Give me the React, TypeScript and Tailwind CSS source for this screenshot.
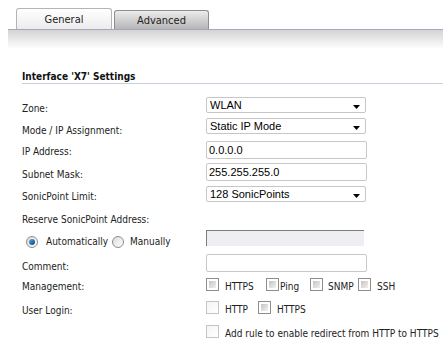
import React from 'react'

function Select({ value }: { value: string }) {
  return (
    <div className="flex items-start w-[160px] h-[16px] border border-[#c6c6c6] rounded-[2px] bg-white pl-[3px]">
      <span className="font-['Liberation_Sans',sans-serif] text-[11px] leading-[14px] text-black">{value}</span>
      <svg className="ml-auto mr-[5px] mt-[7px]" width="7" height="4" viewBox="0 0 7 4">
        <path d="M0 0H7L3.5 4Z" fill="#000" />
      </svg>
    </div>
  )
}

function TextBox({ value }: { value?: string }) {
  return (
    <div className="flex items-center w-[161px] h-[18px] border border-[#c8c8c8] rounded-[2px] bg-white pl-[2px]">
      <span className="font-['Liberation_Sans',sans-serif] text-[11px] leading-[14px] text-black">{value}</span>
    </div>
  )
}

function Check({ light }: { light?: boolean }) {
  return light ? (
    <div className="w-[13px] h-[13px] shrink-0 border border-[#c4c4c4] bg-gradient-to-br from-[#f4f4f4] to-white" />
  ) : (
    <div className="w-[13px] h-[13px] shrink-0 border border-[#8e8e8e] bg-white p-[2px]">
      <div className="w-full h-full bg-gradient-to-br from-[#c4c4c4] to-[#f2f2f2]" />
    </div>
  )
}

function Radio({ on }: { on?: boolean }) {
  return (
    <div className="flex items-center justify-center w-[12px] h-[12px] rounded-full border border-[#8c8c8c] bg-gradient-to-br from-[#dcdcdc] to-white shrink-0">
      {on && <div className="w-[6px] h-[6px] rounded-full bg-gradient-to-br from-[#5fb0e8] to-[#0b3f7a]" />}
    </div>
  )
}

export default function App() {
  return (
    <div className="w-[443px] h-[356px] overflow-hidden bg-white text-[#222] font-['DejaVu_Sans_Condensed','Liberation_Sans',sans-serif] text-[10px] leading-[13px]">
      {/* tabs */}
      <div className="flex items-end pl-[16px] pt-[8px] gap-[2px]">
        <div className="flex justify-center items-center w-[96px] h-[21px] border border-b-0 border-[#b4b4b4] rounded-t-[3px] bg-gradient-to-b from-white to-[#ececec] text-[11px] text-[#222]">
          General
        </div>
        <div className="flex justify-center items-center w-[95px] h-[19px] border border-b-0 border-[#8e8e8e] rounded-t-[3px] bg-gradient-to-b from-[#ececec] to-[#b6b6b6] text-[11px] text-[#222]">
          Advanced
        </div>
      </div>
      <div className="ml-[8px] h-[20px] border-t border-[#a6a6c0] bg-gradient-to-b from-[#d4d4d4] to-white" />

      {/* section title */}
      <div className="ml-[22px] mt-[22px] border-b border-[#c6d0dc] font-bold text-[10px] leading-[12px] text-[#111]">
        Interface 'X7' Settings
      </div>

      <div className="flex pl-[22px] h-[21px] mt-[13px]">
        <div className="w-[184px] pt-[5px]">Zone:</div>
        <Select value="WLAN" />
      </div>
      <div className="flex pl-[22px] h-[23px]">
        <div className="w-[184px] pt-[6px]">Mode / IP Assignment:</div>
        <Select value="Static IP Mode" />
      </div>
      <div className="flex pl-[22px] h-[22px]">
        <div className="w-[184px] pt-[4px]">IP Address:</div>
        <TextBox value="0.0.0.0" />
      </div>
      <div className="flex pl-[22px] h-[23px]">
        <div className="w-[184px] pt-[5px]">Subnet Mask:</div>
        <TextBox value="255.255.255.0" />
      </div>
      <div className="flex pl-[22px] h-[27px]">
        <div className="w-[184px] pt-[4px]">SonicPoint Limit:</div>
        <Select value="128 SonicPoints" />
      </div>
      <div className="flex pl-[22px] h-[17px]">
        <div>Reserve SonicPoint Address:</div>
      </div>
      <div className="flex pl-[26px] h-[24px]">
        <div className="flex w-[180px] pt-[5px]">
          <div className="flex items-start w-[86px]">
            <div className="mt-[1px]">
              <Radio on />
            </div>
            <span className="ml-[8px]">Automatically</span>
          </div>
          <div className="flex items-start">
            <div className="mt-[1px]">
              <Radio />
            </div>
            <span className="ml-[6px]">Manually</span>
          </div>
        </div>
        <div className="w-[158px] h-[16px] border-t border-l border-[#7c7c7c] bg-[#eeeff2]" />
      </div>
      <div className="flex pl-[22px] h-[24px]">
        <div className="w-[184px] pt-[6px]">Comment:</div>
        <TextBox />
      </div>
      <div className="flex pl-[22px] h-[23px]">
        <div className="w-[184px] pt-[2px]">Management:</div>
        <div className="flex items-start">
          <div className="flex items-start w-[60px]">
            <Check />
            <span className="ml-[6px] pt-[2px]">HTTPS</span>
          </div>
          <div className="flex items-start w-[44px]">
            <Check />
            <span className="ml-[1px] pt-[2px]">Ping</span>
          </div>
          <div className="flex items-start w-[48px]">
            <Check />
            <span className="ml-[5px] pt-[2px]">SNMP</span>
          </div>
          <div className="flex items-start">
            <Check />
            <span className="ml-[6px] pt-[2px]">SSH</span>
          </div>
        </div>
      </div>
      <div className="flex pl-[22px] h-[24px]">
        <div className="w-[184px] pt-[3px]">User Login:</div>
        <div className="flex items-start">
          <div className="flex items-start w-[52px]">
            <Check light />
            <span className="ml-[6px] pt-[2px]">HTTP</span>
          </div>
          <div className="flex items-start">
            <Check />
            <span className="ml-[6px] pt-[2px]">HTTPS</span>
          </div>
        </div>
      </div>
      <div className="flex pl-[206px]">
        <Check light />
        <span className="ml-[6px] pt-[2px]">Add rule to enable redirect from HTTP to HTTPS</span>
      </div>
    </div>
  )
}
